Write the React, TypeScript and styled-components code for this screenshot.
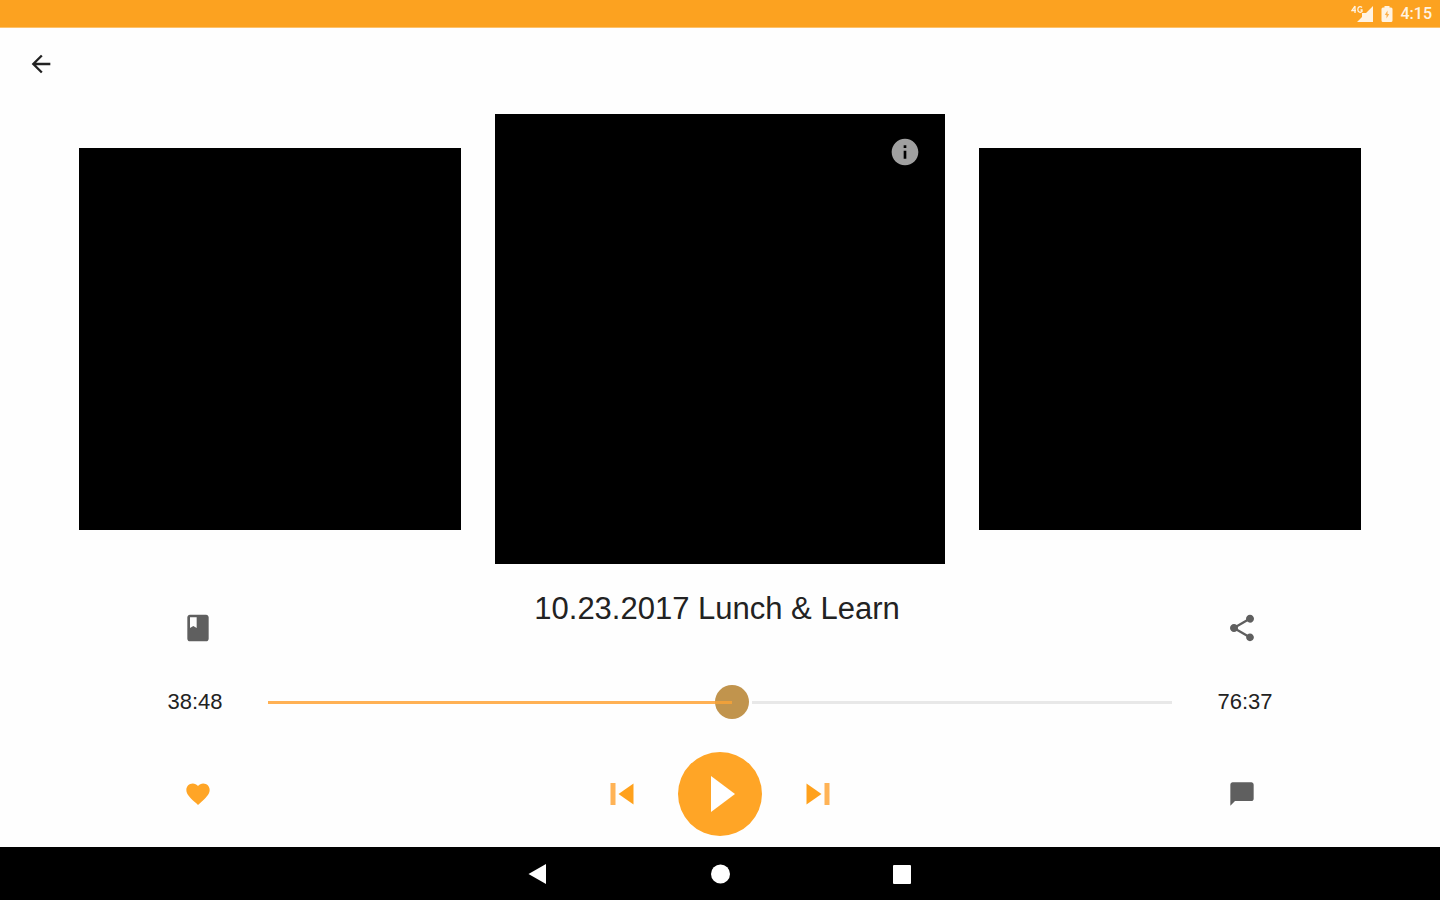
import React, { useState } from "react";
import styled, { createGlobalStyle } from "styled-components";

const GlobalStyle = createGlobalStyle`
  *, *::before, *::after { box-sizing: border-box; }
  body {
    margin: 0;
    background: #fefefe;
    color: #222;
    font-family: "Liberation Sans", Arial, sans-serif;
  }
`;

const Page = styled.div`
  display: flex;
  flex-direction: column;
  min-height: 100vh;
`;

const StatusBar = styled.div`
  display: flex;
  align-items: center;
  justify-content: flex-end;
  gap: 8px;
  height: 28px;
  padding-right: 8px;
  background: #fca220;
  border-bottom: 1px solid #fdc26c;
  color: #fff3e2;
  font: 500 16px/28px Roboto, sans-serif;
`;

const Toolbar = styled.header`
  display: flex;
  align-items: center;
  height: 71px;
  padding: 0 27px;
`;

const IconButton = styled.button<{ $color?: string }>`
  display: flex;
  padding: 0;
  border: 0;
  background: none;
  color: ${(p) => p.$color ?? "#5f5f5f"};
  cursor: pointer;
`;

const Main = styled.main`
  flex: 1;
  padding-bottom: 11px;
`;

const Carousel = styled.section`
  display: grid;
  grid-template-columns: 382fr 450fr 382fr;
  align-items: center;
  gap: 34px;
  padding: 15px 79px 0;
`;

const Cover = styled.div`
  display: flex;
  justify-content: flex-end;
  align-items: flex-start;
  aspect-ratio: 1;
  padding: 22px 24px;
  background: #000;
`;

const Player = styled.section`
  display: grid;
  grid-template-columns: 140px 1fr 140px;
  justify-items: center;
  padding: 27px 128px 0;
`;

const InfoRow = styled.div`
  display: grid;
  grid-column: 1 / -1;
  grid-template-columns: subgrid;
  justify-items: center;
  align-items: end;
  width: 100%;
  height: 53px;
`;

const Title = styled.h1`
  align-self: start;
  margin: 0;
  padding-right: 6px;
  font-size: 31px;
  font-weight: 400;
  line-height: 36px;
`;

const SeekRow = styled(InfoRow)`
  align-items: center;
  height: 34px;
  margin-top: 41px;
`;

const Time = styled.span<{ $side: "start" | "end" }>`
  justify-self: ${(p) => p.$side};
  width: 134px;
  text-align: center;
  font-size: 22px;
  line-height: 32px;
`;

const Seek = styled.input`
  width: 100%;
  height: 34px;
  margin: 0;
  appearance: none;
  background: none;
  --at: calc(17px + (100% - 34px) * var(--progress));

  &::-webkit-slider-runnable-track {
    height: 34px;
    background: linear-gradient(
        to right,
        #ffb154 var(--at),
        transparent var(--at),
        transparent calc(var(--at) + 20px),
        #e8e8e8 calc(var(--at) + 20px)
      )
      center / 100% 3px no-repeat;
  }

  &::-webkit-slider-thumb {
    appearance: none;
    width: 34px;
    height: 34px;
    border-radius: 50%;
    background: linear-gradient(#efa03a, #efa03a) left center / 17px 3px no-repeat #c1944d;
  }
`;

const ControlRow = styled(InfoRow)`
  align-items: center;
  height: 84px;
  margin-top: 33px;
`;

const Controls = styled.div`
  display: flex;
  align-items: center;
  gap: 33px;
`;

const PlayButton = styled(IconButton)`
  width: 84px;
  height: 84px;
  border-radius: 50%;
  background: #ffa526;
`;

const NavBar = styled.nav`
  display: flex;
  align-items: center;
  justify-content: center;
  gap: 154px;
  height: 53px;
  background: #000;
`;

type IconProps = { size: number; d: string };

const Icon = ({ size, d }: IconProps) => (
  <svg width={size} height={size} viewBox="0 0 24 24" fill="currentColor" aria-hidden="true">
    <path d={d} />
  </svg>
);

const paths = {
  back: "M20 11H7.83l5.59-5.59L12 4l-8 8 8 8 1.41-1.41L7.83 13H20v-2z",
  info: "M12 2C6.48 2 2 6.48 2 12s4.48 10 10 10 10-4.48 10-10S17.52 2 12 2zm1 15h-2v-6h2v6zm0-8h-2V7h2v2z",
  book: "M18 2H6c-1.1 0-2 .9-2 2v16c0 1.1.9 2 2 2h12c1.1 0 2-.9 2-2V4c0-1.1-.9-2-2-2zM6 4h5v8l-2.5-1.5L6 12V4z",
  share:
    "M18 16.08c-.76 0-1.44.3-1.96.77L8.91 12.7c.05-.23.09-.46.09-.7s-.04-.47-.09-.7l7.05-4.11c.54.5 1.25.81 2.04.81 1.66 0 3-1.34 3-3s-1.34-3-3-3-3 1.34-3 3c0 .24.04.47.09.7L8.04 9.81C7.5 9.31 6.79 9 6 9c-1.66 0-3 1.34-3 3s1.34 3 3 3c.79 0 1.5-.31 2.04-.81l7.12 4.16c-.05.21-.08.43-.08.65 0 1.61 1.31 2.92 2.92 2.92 1.61 0 2.92-1.31 2.92-2.92s-1.31-2.92-2.92-2.92z",
  heart:
    "M12 21.35l-1.45-1.32C5.4 15.36 2 12.28 2 8.5 2 5.42 4.42 3 7.5 3c1.74 0 3.41.81 4.5 2.09C13.09 3.81 14.76 3 16.5 3 19.58 3 22 5.42 22 8.5c0 3.78-3.4 6.86-8.55 11.54L12 21.35z",
  chat: "M20 2H4c-1.1 0-1.99.9-1.99 2L2 22l4-4h14c1.1 0 2-.9 2-2V4c0-1.1-.9-2-2-2z",
};

const SkipIcon = ({ next }: { next?: boolean }) => (
  <svg width="46" height="46" viewBox="0 0 46 46" aria-hidden="true">
    <g transform={next ? "translate(46 0) scale(-1 1)" : undefined}>
      <path d="M11.5 12h5v22h-5z" fill="#ffb356" />
      <path d="M34.5 12.500v21L19.500 23z" fill="#ffa11c" />
    </g>
  </svg>
);

const DURATION = 4597;

export default function App() {
  const [position, setPosition] = useState(2362);
  return (
    <Page>
      <GlobalStyle />
      <StatusBar>
        <svg width="22" height="18" viewBox="0 0 22 18" fill="currentColor" aria-hidden="true">
          <path d="M22 1v16H6l5-5V8h4z" />
          <path d="M4 1L1 5.500h4M4 1v7M11 2.500C9 .5 6.800 2 6.800 4.500S9 8 11 6.500V5H9.500" fill="none" stroke="currentColor" strokeWidth="1.300" />
        </svg>
        <svg width="12" height="18" viewBox="0 0 12 18" aria-hidden="true">
          <path d="M3.500 1h5v1.500h1.500a1.500 1.500 0 0 1 1.500 1.500V15.500A1.500 1.500 0 0 1 10 17H2a1.500 1.500 0 0 1-1.500-1.500V4A1.500 1.500 0 0 1 2 2.500h1.500z" fill="currentColor" />
          <path d="M6.500 5.500L3.800 10h1.700v3.500L8.200 9H6.500z" fill="#fcb04a" />
        </svg>
        <span>4:15</span>
      </StatusBar>
      <Toolbar>
        <IconButton aria-label="Back" $color="#222">
          <Icon size={28} d={paths.back} />
        </IconButton>
      </Toolbar>
      <Main>
        <Carousel aria-label="Episodes">
          <Cover />
          <Cover>
            <IconButton aria-label="Episode information" $color="#a0a0a0">
              <Icon size={32} d={paths.info} />
            </IconButton>
          </Cover>
          <Cover />
        </Carousel>
        <Player aria-label="Player">
          <InfoRow>
            <IconButton aria-label="Bookmarks">
              <Icon size={32} d={paths.book} />
            </IconButton>
            <Title>10.23.2017 Lunch &amp; Learn</Title>
            <IconButton aria-label="Share">
              <Icon size={32} d={paths.share} />
            </IconButton>
          </InfoRow>
          <SeekRow>
            <Time $side="start">38:48</Time>
            <Seek
              type="range"
              aria-label="Playback position"
              min={0}
              max={DURATION}
              value={position}
              onChange={(e) => setPosition(Number(e.target.value))}
              style={{ "--progress": position / DURATION } as React.CSSProperties}
            />
            <Time $side="end">76:37</Time>
          </SeekRow>
          <ControlRow>
            <IconButton aria-label="Favourite" $color="#ffa526">
              <Icon size={28} d={paths.heart} />
            </IconButton>
            <Controls>
              <IconButton aria-label="Previous">
                <SkipIcon />
              </IconButton>
              <PlayButton aria-label="Play" $color="#fff">
                <svg width="84" height="84" viewBox="0 0 84 84" fill="currentColor" aria-hidden="true">
                  <path d="M33 24v36l24-18z" />
                </svg>
              </PlayButton>
              <IconButton aria-label="Next">
                <SkipIcon next />
              </IconButton>
            </Controls>
            <IconButton aria-label="Comments">
              <Icon size={28} d={paths.chat} />
            </IconButton>
          </ControlRow>
        </Player>
      </Main>
      <NavBar aria-label="System">
        <IconButton aria-label="System back" $color="#fff">
          <svg width="28" height="28" viewBox="0 0 28 28" fill="currentColor" aria-hidden="true">
            <path d="M4.500 14L22 4v20z" />
          </svg>
        </IconButton>
        <IconButton aria-label="Home" $color="#fff">
          <svg width="28" height="28" viewBox="0 0 28 28" fill="currentColor" aria-hidden="true">
            <circle cx="14.500" cy="14" r="9.500" />
          </svg>
        </IconButton>
        <IconButton aria-label="Recent apps" $color="#fff">
          <svg width="28" height="28" viewBox="0 0 28 28" fill="currentColor" aria-hidden="true">
            <rect x="5" y="5" width="18" height="19" rx="1" />
          </svg>
        </IconButton>
      </NavBar>
    </Page>
  );
}
